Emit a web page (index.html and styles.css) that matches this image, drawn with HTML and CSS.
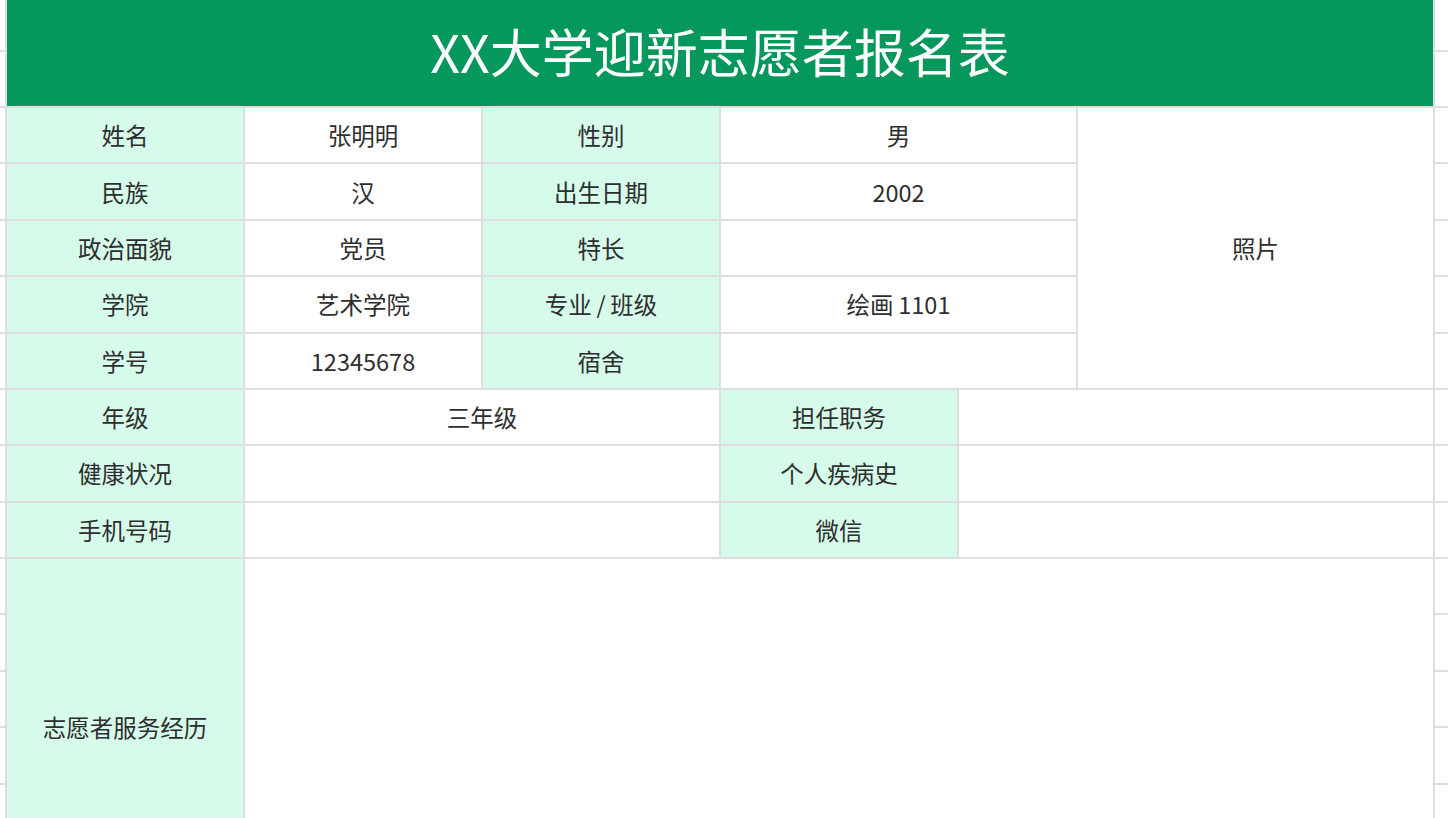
FILE: index.html
```html
<!DOCTYPE html>
<html lang="zh-CN">
<head>
<meta charset="utf-8">
<title>XX大学迎新志愿者报名表</title>
<link rel="stylesheet" href="styles.css">
</head>
<body>
<div class="sheet">
  <div class="edge l r1"></div><div class="edge rt r1"></div>
  <div class="edge l r2"></div><div class="edge rt r2"></div>
  <div class="edge l r3"></div><div class="edge rt r3"></div>
  <div class="edge l r4"></div><div class="edge rt r4"></div>
  <div class="edge l r5"></div><div class="edge rt r5"></div>
  <div class="edge l r6"></div><div class="edge rt r6"></div>
  <div class="edge l r7"></div><div class="edge rt r7"></div>
  <div class="edge l r8"></div><div class="edge rt r8"></div>
  <div class="edge l r9"></div><div class="edge rt r9"></div>
  <div class="edge l r10"></div><div class="edge rt r10"></div>
  <div class="edge l r11"></div><div class="edge rt r11"></div>
  <div class="edge l r12"></div><div class="edge rt r12"></div>
  <div class="edge l r13"></div><div class="edge rt r13"></div>
  <div class="edge l r14"></div><div class="edge rt r14"></div>
  <div class="edge l r15"></div><div class="edge rt r15"></div>
  <div class="edge l r16"></div><div class="edge rt r16"></div>

  <div class="title">XX大学迎新志愿者报名表</div>

  <div class="cell lab c1 r3">姓名</div>
  <div class="cell c2 r3">张明明</div>
  <div class="cell lab c3 r3">性别</div>
  <div class="cell c4h r3">男</div>
  <div class="cell photo">照片</div>

  <div class="cell lab c1 r4">民族</div>
  <div class="cell c2 r4">汉</div>
  <div class="cell lab c3 r4">出生日期</div>
  <div class="cell c4h r4">2002</div>

  <div class="cell lab c1 r5">政治面貌</div>
  <div class="cell c2 r5">党员</div>
  <div class="cell lab c3 r5">特长</div>
  <div class="cell c4h r5"></div>

  <div class="cell lab c1 r6">学院</div>
  <div class="cell c2 r6">艺术学院</div>
  <div class="cell lab c3 r6">专业&#8201;/&#8201;班级</div>
  <div class="cell c4h r6">绘画&#8201;1101</div>

  <div class="cell lab c1 r7">学号</div>
  <div class="cell c2 r7">12345678</div>
  <div class="cell lab c3 r7">宿舍</div>
  <div class="cell c4h r7"></div>

  <div class="cell lab c1 r8">年级</div>
  <div class="cell c23 r8">三年级</div>
  <div class="cell lab c4 r8">担任职务</div>
  <div class="cell c56 r8"></div>

  <div class="cell lab c1 r9">健康状况</div>
  <div class="cell c23 r9"></div>
  <div class="cell lab c4 r9">个人疾病史</div>
  <div class="cell c56 r9"></div>

  <div class="cell lab c1 r10">手机号码</div>
  <div class="cell c23 r10"></div>
  <div class="cell lab c4 r10">微信</div>
  <div class="cell c56 r10"></div>

  <div class="cell lab c1 exp">志愿者服务经历</div>
  <div class="cell c26 exp"></div>
</div>
</body>
</html>
```

FILE: styles.css
```css
html, body {
  margin: 0;
  padding: 0;
  background: #ffffff;
  overflow: hidden;
}

body {
  font-family: "Noto Sans CJK SC", "Noto Sans", sans-serif;
  color: #2e2e2e;
}

.sheet {
  display: grid;
  grid-template-columns: 7px repeat(12, 119px) 1fr;
  grid-template-rows: 52px 56px repeat(14, 56.375px);
  width: 1448px;
  height: 818px;
  overflow: hidden;
}

.edge {
  box-sizing: border-box;
  border-bottom: 2px solid #dedede;
}
.edge.l { grid-column: 1 / 2; border-right: 2px solid #dedede; }
.edge.rt { grid-column: 14 / 15; }

.r1 { grid-row: 1 / 2; }
.r2 { grid-row: 2 / 3; }
.r3 { grid-row: 3 / 4; }
.r4 { grid-row: 4 / 5; }
.r5 { grid-row: 5 / 6; }
.r6 { grid-row: 6 / 7; }
.r7 { grid-row: 7 / 8; }
.r8 { grid-row: 8 / 9; }
.r9 { grid-row: 9 / 10; }
.r10 { grid-row: 10 / 11; }
.r11 { grid-row: 11 / 12; }
.r12 { grid-row: 12 / 13; }
.r13 { grid-row: 13 / 14; }
.r14 { grid-row: 14 / 15; }
.r15 { grid-row: 15 / 16; }
.r16 { grid-row: 16 / 17; }

.title {
  grid-column: 2 / 14;
  grid-row: 1 / 3;
  background: #06975d;
  color: #ffffff;
  font-size: 52px;
  display: flex;
  align-items: center;
  justify-content: center;
  border-bottom: 2px solid #dedede;
  border-right: 2px solid #dedede;
  box-sizing: border-box;
  padding-bottom: 6px;
}

.cell {
  box-sizing: border-box;
  border-right: 2px solid #dedede;
  border-bottom: 2px solid #dedede;
  background: #ffffff;
  display: flex;
  align-items: center;
  justify-content: center;
  font-size: 23.5px;
  white-space: pre;
}

.cell.lab { background: #d6fbea; }

.c1 { grid-column: 2 / 4; }
.c2 { grid-column: 4 / 6; }
.c3 { grid-column: 6 / 8; }
.c4h { grid-column: 8 / 11; }
.c23 { grid-column: 4 / 8; }
.c4 { grid-column: 8 / 10; }
.c56 { grid-column: 10 / 14; }
.c26 { grid-column: 4 / 14; }

.photo {
  grid-column: 11 / 14;
  grid-row: 3 / 8;
}

.exp { grid-row: 11 / 17; }
```
